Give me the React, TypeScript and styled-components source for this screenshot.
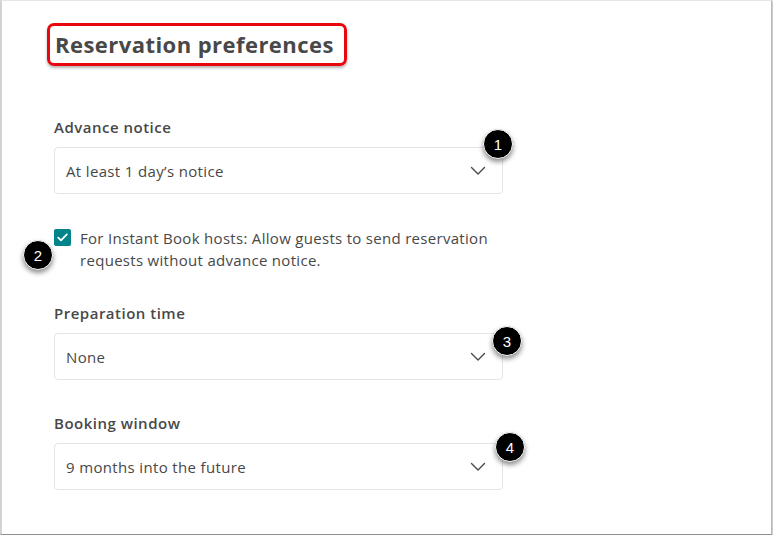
import styled, { createGlobalStyle } from "styled-components";

const GlobalStyle = createGlobalStyle`
  html, body {
    margin: 0;
    padding: 0;
    background: #ffffff;
  }
  body {
    font-family: "Open Sans", "Liberation Sans", sans-serif;
    color: #484848;
  }
`;

const Frame = styled.div`
  box-sizing: border-box;
  width: 772px;
  height: 535px;
  border-left: 2px solid #d2d2d2;
  border-top: 1px solid #e6e6e6;
  border-right: 1px solid #b8b8b8;
  border-bottom: 1px solid #8f8f8f;
  box-shadow: 1px 1px 2px rgba(0, 0, 0, 0.3);
  background: #fff;
  padding: 22px 0 0 52px;
`;

const TitleBox = styled.div`
  display: inline-block;
  margin-left: -7px;
  padding: 4px 10px 5px 5px;
  border: 3px solid #e8070c;
  border-radius: 7px;
  box-shadow: 0 2px 3px rgba(0, 0, 0, 0.3);
`;

const Title = styled.h1`
  margin: 0;
  font-size: 22px;
  line-height: 28px;
  font-weight: 700;
  color: #484848;
  letter-spacing: 0.45px;
`;

const Form = styled.div`
  display: flex;
  flex-direction: column;
  width: 449px;
  margin-top: 51px;
`;

const Field = styled.div<{ $gap?: number }>`
  display: flex;
  flex-direction: column;
  gap: 10px;
  margin-bottom: ${({ $gap }) => $gap ?? 33}px;
`;

const Label = styled.div`
  font-size: 15px;
  line-height: 20px;
  font-weight: 600;
  color: #484848;
  letter-spacing: 0.5px;
`;

const SelectWrap = styled.div`
  position: relative;
`;

const Select = styled.div`
  box-sizing: border-box;
  height: 47px;
  display: flex;
  align-items: center;
  justify-content: space-between;
  padding: 0 16px 0 11px;
  border: 1px solid #e4e4e4;
  border-radius: 4px;
  font-size: 15px;
  letter-spacing: 0.35px;
  color: #484848;
`;

const CheckRow = styled.div`
  position: relative;
  display: flex;
  align-items: flex-start;
  gap: 9px;
  margin-bottom: 32px;
`;

const Box = styled.div`
  flex: none;
  width: 17px;
  height: 17px;
  margin-top: 2px;
  border-radius: 2px;
  background: #008489;
  display: flex;
  align-items: center;
  justify-content: center;
`;

const CheckText = styled.div`
  font-size: 15px;
  line-height: 22px;
  letter-spacing: 0.3px;
  color: #484848;
`;

const Badge = styled.div<{ $x: number; $y: number }>`
  position: absolute;
  left: ${({ $x }) => $x}px;
  top: ${({ $y }) => $y}px;
  width: 30px;
  height: 30px;
  border-radius: 50%;
  background: #000;
  border: 1.5px solid #fff;
  box-sizing: border-box;
  box-shadow: 0 3px 5px rgba(0, 0, 0, 0.45);
  color: #fff;
  font-size: 15px;
  letter-spacing: 0;
  font-family: "Liberation Sans", Arial, sans-serif;
  display: flex;
  align-items: center;
  justify-content: center;
`;

const Chevron = () => (
  <svg width="16" height="10" viewBox="0 0 16 10" fill="none">
    <polyline points="1.5,1.5 8,8 14.5,1.5" stroke="#484848" strokeWidth="1.4" strokeLinecap="round" strokeLinejoin="round" />
  </svg>
);

const Check = () => (
  <svg width="11" height="9" viewBox="0 0 11 9" fill="none">
    <polyline points="1.2,4.6 4,7.4 9.8,1.4" stroke="#fff" strokeWidth="1.8" strokeLinecap="round" strokeLinejoin="round" />
  </svg>
);

function Dropdown({ value, badge, bx, by }: { value: string; badge: number; bx: number; by: number }) {
  return (
    <SelectWrap>
      <Select>
        <span>{value}</span>
        <Chevron />
      </Select>
      <Badge $x={bx} $y={by}>{badge}</Badge>
    </SelectWrap>
  );
}

export default function App() {
  return (
    <>
      <GlobalStyle />
      <Frame>
        <TitleBox>
          <Title>Reservation preferences</Title>
        </TitleBox>
        <Form>
          <Field $gap={33}>
            <Label>Advance notice</Label>
            <Dropdown value="At least 1 day’s notice" badge={1} bx={429} by={-18} />
          </Field>
          <CheckRow>
            <Box>
              <Check />
            </Box>
            <CheckText>
              For Instant Book hosts: Allow guests to send reservation
              <br />
              requests without advance notice.
            </CheckText>
            <Badge $x={-31} $y={13}>2</Badge>
          </CheckRow>
          <Field $gap={33}>
            <Label>Preparation time</Label>
            <Dropdown value="None" badge={3} bx={438} by={-7} />
          </Field>
          <Field $gap={0}>
            <Label>Booking window</Label>
            <Dropdown value="9 months into the future" badge={4} bx={441} by={-11} />
          </Field>
        </Form>
      </Frame>
    </>
  );
}
